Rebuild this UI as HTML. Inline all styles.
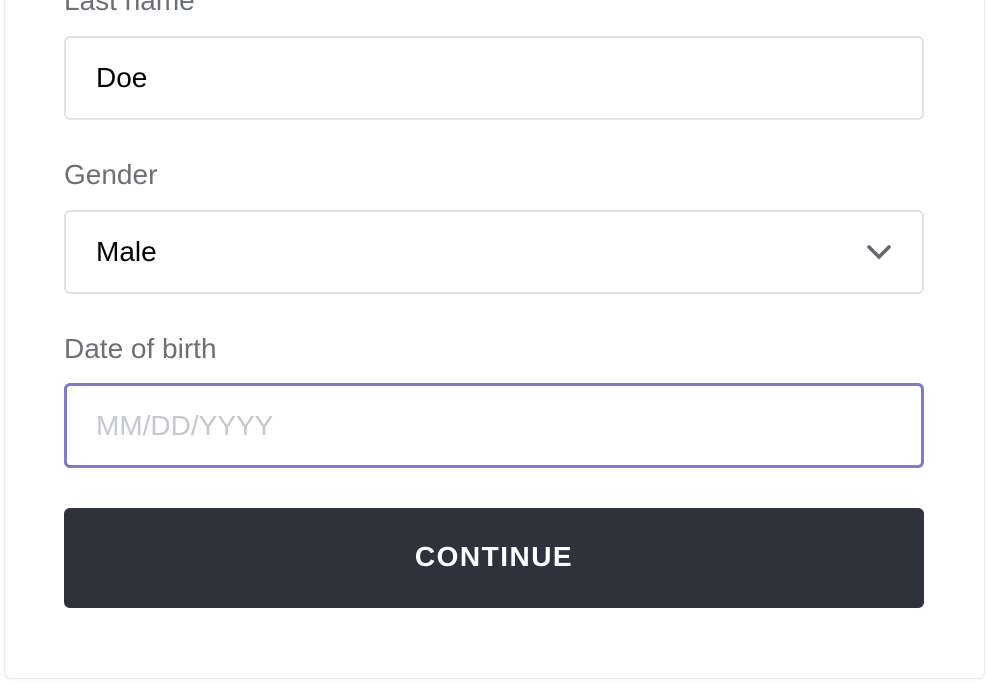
<!DOCTYPE html>
<html><head><style>
body{margin:0;width:988px;height:684px;background:#fff;font-family:"Liberation Sans",sans-serif;overflow:hidden;position:relative}
.card{position:absolute;left:4px;top:-20px;width:979px;height:697px;border:1px solid #ececec;border-radius:7px;box-shadow:0 1px 2px rgba(0,0,0,.05);background:#fff}
.lbl{position:absolute;left:64px;font-size:28px;color:#6b7075}
.in{position:absolute;left:64px;height:80px;border:2px solid #e2e2e2;border-radius:6px;box-sizing:content-box;font-size:28px;line-height:80px;padding-left:30px;width:826px;color:#000}
.btn{position:absolute;left:64px;top:508px;width:860px;height:100px;background:#2d323d;border-radius:6px;color:#fff;font-weight:bold;font-size:28px;letter-spacing:1.5px;text-align:center;line-height:98px}
</style></head><body>
<div class="card"></div>
<div class="lbl" style="top:-15px">Last name</div>
<div class="in" style="top:36px">Doe</div>
<div class="lbl" style="top:159px">Gender</div>
<div class="in" style="top:210px">Male
<svg style="position:absolute;right:30px;top:32px" width="26" height="16" viewBox="0 0 26 16"><path d="M3 3 L13 13 L23 3" fill="none" stroke="#5f666d" stroke-width="3.5" stroke-linecap="round"/></svg></div>
<div class="lbl" style="top:333px">Date of birth</div>
<div class="in" style="top:383px;border:3px solid #7f7bcb;height:79px;line-height:79px;padding-left:29px;width:825px;color:#c5c8cc">MM/DD/YYYY</div>
<div class="btn">CONTINUE</div>
</body></html>
